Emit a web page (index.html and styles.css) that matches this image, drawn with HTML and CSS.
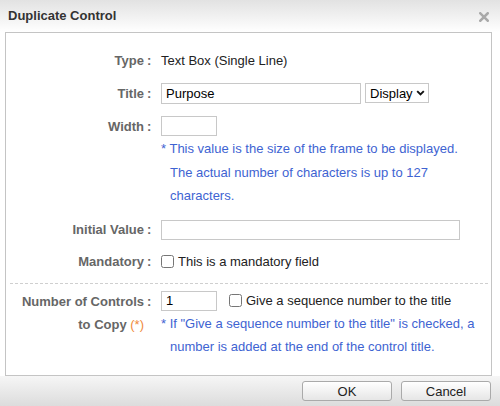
FILE: index.html
```html
<!DOCTYPE html>
<html>
<head>
<meta charset="utf-8">
<link rel="stylesheet" href="styles.css">
</head>
<body>
<div class="dialog">
  <div class="header">
    <span class="title">Duplicate Control</span>
    <span class="close"><svg width="10" height="10" viewBox="0 0 10 10"><path d="M1.3 1.3 L8.7 8.7 M8.7 1.3 L1.3 8.7" stroke="#a9a9a9" stroke-width="2.6" stroke-linecap="square"/></svg></span>
  </div>
  <div class="body">
    <div class="box">
      <div class="row r-type">
        <div class="lbl">Type</div><div class="colon">:</div>
        <div class="val">Text Box (Single Line)</div>
      </div>
      <div class="row r-title">
        <div class="lbl">Title</div><div class="colon">:</div>
        <div class="val">
          <input class="inp inp-title" type="text" value="Purpose">
          <span class="sel"><select><option>Display</option></select><svg class="chev" width="9" height="6" viewBox="0 0 9 6"><path d="M1.2 1.2 L4.5 4.5 L7.8 1.2" fill="none" stroke="#111" stroke-width="1.9"/></svg></span>
        </div>
      </div>
      <div class="row r-width">
        <div class="lbl">Width</div><div class="colon">:</div>
        <div class="val"><input class="inp inp-small" type="text" value=""></div>
      </div>
      <div class="row r-note">
        <div class="lbl"></div><div class="colon"></div>
        <div class="val note">* This value is the size of the frame to be displayed. The actual number of characters is up to 127 characters.</div>
      </div>
      <div class="row r-init">
        <div class="lbl">Initial Value</div><div class="colon">:</div>
        <div class="val"><input class="inp inp-wide" type="text" value=""></div>
      </div>
      <div class="row r-mand">
        <div class="lbl">Mandatory</div><div class="colon">:</div>
        <div class="val"><label class="chk"><input type="checkbox"><span>This is a mandatory field</span></label></div>
      </div>
      <div class="sep"></div>
      <div class="row r-num">
        <div class="lbl">Number of Controls<br>to Copy <span class="req">(*)</span></div><div class="colon">:</div>
        <div class="val">
          <div class="numline">
            <input class="inp inp-small" type="text" value="1">
            <label class="chk chk-seq"><input type="checkbox"><span>Give a sequence number to the title</span></label>
          </div>
          <div class="note note2">* If "Give a sequence number to the title" is checked, a number is added at the end of the control title.</div>
        </div>
      </div>
    </div>
  </div>
  <div class="footer">
    <button class="btn">OK</button>
    <button class="btn">Cancel</button>
  </div>
</div>
</body>
</html>
```
FILE: styles.css
```css
html, body {
  margin: 0;
  padding: 0;
  background: #ffffff;
}
body {
  font-family: "Liberation Sans", Arial, sans-serif;
  font-size: 13px;
  color: #222;
}
.dialog {
  width: 500px;
  height: 406px;
  display: flex;
  flex-direction: column;
}
.header {
  height: 32px;
  flex: none;
  display: flex;
  align-items: center;
  justify-content: space-between;
  padding: 0 11px 0 8px;
  box-sizing: border-box;
  background: linear-gradient(#e2e2e2, #ffffff);
}
.title {
  font-weight: bold;
  color: #333;
  margin-top: -2px;
}
.close {
  display: flex;
  margin-top: 1px;
}
.body {
  padding: 0 8px 0 5px;
}
.box {
  border: 1px solid #c4c4c4;
  background: #fff;
  height: 344px;
  box-sizing: border-box;
  padding-top: 16px;
}
.row {
  display: grid;
  grid-template-columns: 138px 17px 1fr;
  align-items: center;
  min-height: 22px;
}
.lbl {
  text-align: right;
  font-weight: bold;
  color: #666;
}
.colon {
  font-weight: bold;
  color: #666;
  padding-left: 3px;
}
.val {
  display: flex;
  align-items: center;
}
.r-title, .r-width { margin-top: 11px; }
.r-note { align-items: start; }
.note {
  display: block;
  color: #3e63d2;
  line-height: 23.5px;
  padding-left: 9px;
  text-indent: -9px;
  padding-right: 20px;
}
.r-init { margin-top: 11px; }
.r-mand { margin-top: 10px; }
.inp {
  box-sizing: border-box;
  border: 1px solid #c8c8c8;
  border-radius: 0;
  height: 20px;
  font-family: "Liberation Sans", Arial, sans-serif;
  font-size: 13px;
  color: #000;
  padding: 0 4px;
  margin: 0;
  outline: none;
}
.inp-title { width: 200px; height: 21px; }
.inp-small { width: 56px; }
.inp-wide { width: 299px; }
.sel {
  display: inline-flex;
  align-items: center;
  margin-left: 4px;
}
.sel select {
  appearance: none;
  -webkit-appearance: none;
  box-sizing: border-box;
  width: 64px;
  height: 20px;
  border: 1px solid #c8c8c8;
  border-radius: 0;
  background: #fff;
  font-family: "Liberation Sans", Arial, sans-serif;
  font-size: 13px;
  color: #000;
  padding: 0 0 0 4px;
  margin: 0;
}
.chev {
  margin-left: -13px;
  pointer-events: none;
}
.chk {
  display: flex;
  align-items: center;
  color: #222;
}
.chk input {
  margin: 0 4px 0 0;
  width: 13px;
  height: 13px;
}
.chk-seq { margin-left: 12px; }
.sep {
  border-top: 1px dashed #cfcfcf;
  margin: 10px 3px 0 4px;
}
.r-num {
  margin-top: 6px;
  align-items: start;
}
.r-num .lbl, .r-num .colon { line-height: 23px; }
.r-num .val {
  flex-direction: column;
  align-items: stretch;
}
.numline {
  display: flex;
  align-items: center;
  height: 22px;
}
.note2 { line-height: 23px; padding-right: 8px; }
.req {
  color: #f08a3c;
  font-weight: normal;
}
.footer {
  flex: 1;
  display: flex;
  justify-content: flex-end;
  align-items: flex-start;
  gap: 9px;
  padding: 5px 9px 0 0;
  box-sizing: border-box;
  background: linear-gradient(#f6f6f6, #dcdcdc);
}
.btn {
  width: 90px;
  height: 20px;
  box-sizing: border-box;
  border: 1px solid #aaaaaa;
  border-radius: 3px;
  background: linear-gradient(#ffffff, #e6e6e6);
  font-family: "Liberation Sans", Arial, sans-serif;
  font-size: 13px;
  color: #222;
  padding: 0;
  margin: 0;
}
```
